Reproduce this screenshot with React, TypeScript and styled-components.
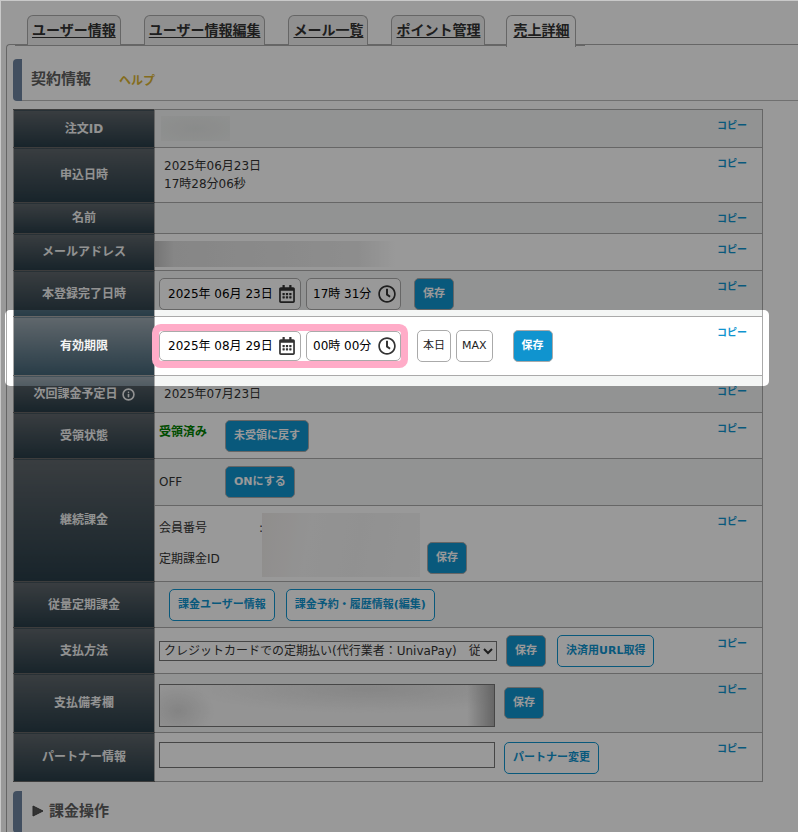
import React from "react";
import styled, { createGlobalStyle, css } from "styled-components";
import { FaRegCalendarAlt, FaRegClock } from "react-icons/fa";
import { Info } from "lucide-react";

const GlobalStyle = createGlobalStyle`
  *, *::before, *::after { box-sizing: border-box; }
  body {
    margin: 0;
    background: #fff;
    color: #333;
    font: 12px/18px "DejaVu Sans", "Noto Sans CJK JP", sans-serif;
  }
  button, input, select, textarea { font: inherit; }
`;

const Page = styled.div`
  min-height: 100vh;
  padding: 14px 0 0 5px;
  border: solid #c9c9c9;
  border-width: 1px 0 0 1px;
  overflow: hidden;
`;

const Tabs = styled.nav`
  position: relative;
  z-index: 1;
  display: flex;
  align-items: flex-end;
  gap: 23px;
  width: max-content;
  height: 31px;
  margin: 0 0 -2px 9px;
  padding: 0 9px 0 12px;
  border-bottom: 1px solid #aaa;
`;

const Tab = styled.a<{ $active?: boolean }>`
  height: 30px;
  padding: 0 4px;
  border: 1px solid #aaa;
  border-bottom: 0;
  border-radius: 6px 6px 0 0;
  background: #f0f0f0;
  color: #333;
  font-size: 14px;
  font-weight: bold;
  line-height: 28px;
  text-decoration: underline;
  text-underline-offset: 2px;
  ${(p) =>
    p.$active &&
    css`
      height: 32px;
      margin: 0 0 -2px -2px;
      padding: 0 6px;
      background: #fff;
    `}
`;

const Panel = styled.main`
  padding: 14px 0 0 6px;
  border: solid #aaa;
  border-width: 1px 0 0 1px;
  border-radius: 4px 0 0 0;
`;

const SectionHeader = styled.header`
  display: flex;
  align-items: center;
  height: 42px;
  margin-bottom: 8px;
  padding: 0 0 3px 9px;
  border: solid #6e84a0;
  border-width: 0 0 0 9px;
  border-radius: 4px 0 0 4px;
  box-shadow: inset 0 -1px #bbb;
`;

const Title = styled.h2`
  display: flex;
  align-items: center;
  gap: 5px;
  margin: 0;
  color: #606060;
  font-size: 15px;
  font-weight: bold;
`;

const HelpLink = styled.a`
  margin: 4px 0 0 28px;
  color: #dcb532;
  font-weight: bold;
  text-decoration: none;
`;

const InfoTable = styled.table`
  width: 100%;
  max-width: 750px;
  margin-bottom: 9px;
  border-collapse: collapse;
`;

const Row = styled.tr<{ $tinted?: boolean; $height?: number }>`
  position: relative;
  height: ${(p) => p.$height ?? 46}px;
  background: ${(p) => (p.$tinted ? "#f4f6f5" : "#fff")};
`;

const Head = styled.th`
  width: 141px;
  padding: 0;
  border: 1px solid #aaa;
  border-top-color: #666;
  border-bottom-color: #666;
  background: linear-gradient(#60676c, #283c47);
  color: #f4f4f4;
  font-weight: bold;
  text-align: center;
`;

const HeadLabel = styled.span`
  display: inline-flex;
  align-items: center;
  gap: 4px;
`;

const Cell = styled.td`
  padding: 7px 15px 5px 4px;
  border: 1px solid #aaa;
  vertical-align: top;
`;

const CellBody = styled.div`
  display: flex;
  align-items: flex-start;
  justify-content: space-between;
`;

const Line = styled.div<{ $gap?: number; $indent?: number; $top?: number }>`
  display: flex;
  align-items: flex-start;
  gap: ${(p) => p.$gap ?? 11}px;
  padding: ${(p) => p.$top ?? 0}px 0 0 ${(p) => p.$indent ?? 0}px;
`;

const CopyButton = styled.button`
  padding: 0;
  border: 0;
  background: none;
  color: #1094cf;
  font-size: 10px;
  font-weight: bold;
  line-height: 18px;
  white-space: nowrap;
`;

const Button = styled.button<{ $kind?: "solid" | "outline" | "plain" }>`
  height: 32px;
  padding: 0 8px;
  border: 1px solid #aaa;
  border-radius: 5px;
  font-size: 11px;
  white-space: nowrap;
  ${(p) =>
    p.$kind === "plain"
      ? css`
          padding: 0 5px;
          background: #fff;
          color: #222;
        `
      : p.$kind === "outline"
        ? css`
            border-color: #1094cf;
            background: #fff;
            color: #1094cf;
            font-weight: bold;
          `
        : css`
            background: #1094cf;
            color: #fff;
            font-weight: bold;
          `}
`;

const Field = styled.label<{ $wide?: boolean }>`
  display: flex;
  align-items: center;
  width: ${(p) => (p.$wide ? 142 : 95)}px;
  height: 32px;
  padding: 0 4px 0 ${(p) => (p.$wide ? 8 : 6)}px;
  border: 1px solid #aaa;
  border-radius: 5px;
  background: #fff;
  color: #333;
  svg { flex: none; }
`;

const DateTime = styled.div<{ $marked?: boolean }>`
  display: flex;
  gap: 5px;
  ${(p) =>
    p.$marked &&
    css`
      position: relative;
      z-index: 3;
      margin-top: 1px;
      border-radius: 3px;
      box-shadow: 0 0 0 7px #ffacc8;
      ${Field} { height: 30px; }
    `}
`;

const FieldInput = styled.input`
  flex: 1;
  width: 0;
  min-width: 0;
  padding: 0;
  border: 0;
  background: none;
  color: #000;
  outline: 0;
`;

const Spotlight = styled.div`
  position: absolute;
  z-index: 2;
  inset: -7px -6px -10px -9px;
  border-radius: 5px;
  box-shadow: 0 0 0 2000px rgba(0, 0, 0, 0.4);
  pointer-events: none;
`;

const Status = styled.span<{ $done?: boolean }>`
  width: 55px;
  padding-top: ${(p) => (p.$done ? 3 : 7)}px;
  color: ${(p) => (p.$done ? "#008000" : "#333")};
  font-weight: ${(p) => (p.$done ? "bold" : "normal")};
`;

const Masked = styled.div<{ $size: "id" | "mail" | "member" }>`
  ${(p) =>
    p.$size === "id"
      ? css`
          width: 69px;
          height: 25px;
          margin: -1px 0 0 2px;
          background: radial-gradient(#e6e8e7, #eff1f0);
        `
      : p.$size === "mail"
        ? css`
            width: 240px;
            height: 26px;
            margin: 0 0 -3px -4px;
            background: linear-gradient(90deg, #c4c4c4, #e0e0e0 8%, #e8e8e8 60%, #ececec 85%, #fff);
          `
        : css`
            width: 158px;
            height: 64px;
            margin-bottom: -2px;
            background: linear-gradient(100deg, #f0ecea, #f5f5f5 30%, #f2f2f2 60%, #f7f7f7);
          `}
`;

const MemberLabels = styled.div`
  display: grid;
  grid-template-columns: 100px auto;
  row-gap: 13px;
  width: 103px;
  margin-bottom: -2px;
  padding-top: 6px;
`;

const MethodSelect = styled.select`
  width: 338px;
  height: 20px;
  margin-top: 6px;
  padding: 0;
  border: 1px solid #767676;
  border-radius: 0;
  background: #fff;
  color: #333;
`;

const Memo = styled.textarea`
  display: block;
  width: 336px;
  height: 43px;
  border: 1px solid #767676;
  resize: none;
  background:
    linear-gradient(90deg, transparent 92%, #aaa 100%),
    radial-gradient(ellipse 36px 28px at 18px 26px, #dcdcdc, transparent),
    radial-gradient(ellipse 180px 24px at 210px 4px, #e0e0e0, transparent),
    #f7f7f7;
`;

const PartnerInput = styled.input`
  width: 336px;
  height: 26px;
  border: 1px solid #767676;
  background: #fff;
`;

function Copy() {
  return <CopyButton type="button">コピー</CopyButton>;
}

function DateTimeFields({ name, date, time, marked }: { name: string; date: string; time: string; marked?: boolean }) {
  return (
    <DateTime $marked={marked}>
      <Field $wide>
        <FieldInput aria-label={`${name} 日付`} defaultValue={date} />
        <FaRegCalendarAlt size={18} />
      </Field>
      <Field>
        <FieldInput aria-label={`${name} 時刻`} defaultValue={time} />
        <FaRegClock size={18} />
      </Field>
    </DateTime>
  );
}

type EntryProps = {
  label: React.ReactNode;
  tinted?: boolean;
  height?: number;
  copy?: boolean;
  children?: React.ReactNode;
};

function Entry({ label, tinted, height, copy = true, children }: EntryProps) {
  return (
    <Row $tinted={tinted} $height={height}>
      <Head scope="row">
        <HeadLabel>{label}</HeadLabel>
      </Head>
      <Cell>
        <CellBody>
          <div>{children}</div>
          {copy && <Copy />}
        </CellBody>
      </Cell>
    </Row>
  );
}

const tabs = ["ユーザー情報", "ユーザー情報編集", "メール一覧", "ポイント管理", "売上詳細"];

export default function App() {
  return (
    <>
      <GlobalStyle />
      <Page>
        <Tabs>
          {tabs.map((t) => (
            <Tab key={t} href="#" $active={t === "売上詳細"}>
              {t}
            </Tab>
          ))}
        </Tabs>
        <Panel>
          <SectionHeader>
            <Title>契約情報</Title>
            <HelpLink href="#">ヘルプ</HelpLink>
          </SectionHeader>
          <InfoTable>
            <tbody>
              <Entry label="注文ID" tinted height={38}>
                <Masked $size="id" />
              </Entry>
              <Entry label="申込日時" height={55}>
                <Line $indent={5} $top={2}>
                  2025年06月23日
                  <br />
                  17時28分06秒
                </Line>
              </Entry>
              <Entry label="名前" tinted height={31} />
              <Entry label="メールアドレス" height={37}>
                <Masked $size="mail" />
              </Entry>
              <Entry label="本登録完了日時" tinted>
                <Line $gap={13}>
                  <DateTimeFields name="本登録完了日時" date="2025年 06月 23日" time="17時 31分" />
                  <Button type="button">保存</Button>
                </Line>
              </Entry>
              <Entry label="有効期限" height={59}>
                <Spotlight />
                <Line $gap={5} $top={6}>
                  <Line $gap={16}>
                    <DateTimeFields name="有効期限" date="2025年 08月 29日" time="00時 00分" marked />
                    <Button type="button" $kind="plain">本日</Button>
                  </Line>
                  <Line $gap={20}>
                    <Button type="button" $kind="plain">MAX</Button>
                    <Button type="button">保存</Button>
                  </Line>
                </Line>
              </Entry>
              <Entry
                label={
                  <>
                    次回課金予定日
                    <Info size={13} strokeWidth={3} />
                  </>
                }
                tinted
                height={37}
              >
                <Line $indent={5} $top={2}>2025年07月23日</Line>
              </Entry>
              <Entry label="受領状態">
                <Line>
                  <Status $done>受領済み</Status>
                  <Button type="button">未受領に戻す</Button>
                </Line>
              </Entry>
              <Row $tinted $height={47}>
                <Head scope="rowgroup" rowSpan={2}>
                  継続課金
                </Head>
                <Cell>
                  <Line>
                    <Status>OFF</Status>
                    <Button type="button">ONにする</Button>
                  </Line>
                </Cell>
              </Row>
              <Row $height={76}>
                <Cell>
                  <CellBody>
                    <Line $gap={0}>
                      <MemberLabels>
                        <span>会員番号</span>
                        <span>:</span>
                        <span>定期課金ID</span>
                      </MemberLabels>
                      <Masked $size="member" />
                      <Line $indent={7} $top={29}>
                        <Button type="button">保存</Button>
                      </Line>
                    </Line>
                    <Copy />
                  </CellBody>
                </Cell>
              </Row>
              <Entry label="従量定期課金" tinted copy={false}>
                <Line $indent={10}>
                  <Button type="button" $kind="outline">課金ユーザー情報</Button>
                  <Button type="button" $kind="outline">課金予約・履歴情報(編集)</Button>
                </Line>
              </Entry>
              <Entry label="支払方法">
                <Line>
                  <Line $gap={9}>
                    <MethodSelect aria-label="支払方法">
                      <option>クレジットカードでの定期払い(代行業者：UnivaPay)　従量課金</option>
                    </MethodSelect>
                    <Button type="button">保存</Button>
                  </Line>
                  <Button type="button" $kind="outline">決済用URL取得</Button>
                </Line>
              </Entry>
              <Entry label="支払備考欄" tinted height={59}>
                <Line $gap={9} $top={3}>
                  <Memo aria-label="支払備考欄" />
                  <Line $top={3}>
                    <Button type="button">保存</Button>
                  </Line>
                </Line>
              </Entry>
              <Entry label="パートナー情報" height={49}>
                <Line $gap={9} $top={2}>
                  <PartnerInput aria-label="パートナー情報" />
                  <Button type="button" $kind="outline">パートナー変更</Button>
                </Line>
              </Entry>
            </tbody>
          </InfoTable>
          <SectionHeader>
            <Title>
              <svg width="13" height="12" viewBox="0 0 13 12" aria-hidden="true">
                <path d="M2 1v10l10-5z" fill="#555" stroke="#444" />
              </svg>
              課金操作
            </Title>
          </SectionHeader>
        </Panel>
      </Page>
    </>
  );
}
